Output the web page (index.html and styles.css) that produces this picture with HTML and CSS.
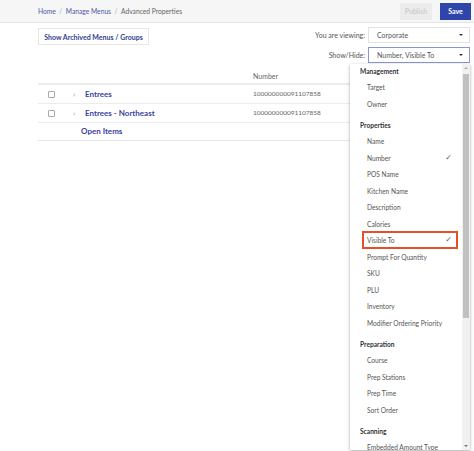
FILE: index.html
```html
<!DOCTYPE html>
<html lang="en">

<head>
  <meta charset="UTF-8">
  <meta name="viewport" content="width=device-width, initial-scale=1.0">
  <title>Advanced Properties</title>
  <link rel="stylesheet" href="styles.css">
</head>

<body>
  <div class="topbar">
    <div class="crumbs">
      <a href="#">Home</a><span class="sep">/</span><a href="#">Manage Menus</a><span class="sep">/</span><span class="current">Advanced Properties</span>
    </div>
    <div class="actions">
      <button class="btn-publish">Publish</button>
      <button class="btn-save">Save</button>
    </div>
  </div>

  <div class="main">
    <div class="toolbar">
      <button class="btn-archived">Show Archived Menus / Groups</button>
      <div class="filters">
        <div class="filter">
          <label>You are viewing:</label>
          <div class="select">Corporate<span class="caret"></span></div>
        </div>
        <div class="filter">
          <label>Show/Hide:</label>
          <div class="select open">Number, Visible To<span class="caret"></span></div>
        </div>
      </div>
    </div>

    <table class="grid">
      <thead>
        <tr>
          <th class="col-check"></th>
          <th class="col-arrow"></th>
          <th class="col-name"></th>
          <th>Number</th>
        </tr>
      </thead>
      <tbody>
        <tr>
          <td class="col-check"><span class="box"></span></td>
          <td class="col-arrow">&rsaquo;</td>
          <td class="col-name"><a href="#">Entrees</a></td>
          <td class="num">100000000091107858</td>
        </tr>
        <tr>
          <td class="col-check"><span class="box"></span></td>
          <td class="col-arrow">&rsaquo;</td>
          <td class="col-name"><a href="#">Entrees - Northeast</a></td>
          <td class="num">100000000091107858</td>
        </tr>
        <tr>
          <td class="col-check"></td>
          <td colspan="2" class="open-items"><a href="#">Open Items</a></td>
          <td></td>
        </tr>
      </tbody>
    </table>
  </div>

  <div class="menu">
    <div class="menu-list">
      <div class="group">Management</div>
      <div class="item">Target</div>
      <div class="item">Owner</div>

      <div class="group">Properties</div>
      <div class="item">Name</div>
      <div class="item checked">Number</div>
      <div class="item">POS Name</div>
      <div class="item">Kitchen Name</div>
      <div class="item">Description</div>
      <div class="item">Calories</div>
      <div class="item checked marked">Visible To</div>
      <div class="item">Prompt For Quantity</div>
      <div class="item">SKU</div>
      <div class="item">PLU</div>
      <div class="item">Inventory</div>
      <div class="item">Modifier Ordering Priority</div>

      <div class="group">Preparation</div>
      <div class="item">Course</div>
      <div class="item">Prep Stations</div>
      <div class="item">Prep Time</div>
      <div class="item">Sort Order</div>

      <div class="group">Scanning</div>
      <div class="item">Embedded Amount Type</div>
    </div>
    <div class="scroll">
      <span class="arrow-up"></span>
      <div class="thumb"></div>
      <span class="arrow-down"></span>
    </div>
  </div>
</body>

</html>
```

FILE: styles.css
```css
* {
  margin: 0;
  padding: 0;
  box-sizing: border-box;
}

body {
  background: #fff;
  font-family: 'Lato', 'Liberation Sans', sans-serif;
  font-size: 7px;
  color: #444;
  position: relative;
  height: 451px;
  overflow: hidden;
}

a {
  text-decoration: none;
}

button {
  font-family: inherit;
  cursor: pointer;
}

.topbar {
  height: 23px;
  background: #f6f6f6;
  border-bottom: 1px solid #e4e4e4;
  display: flex;
  align-items: center;
  justify-content: space-between;
  padding: 0 3px 0 38px;
}

.crumbs {
  color: #666;
  font-size: 6.7px;
}

.crumbs a {
  color: #4a56a8;
}

.crumbs .sep {
  color: #aaa;
  margin: 0 3.5px;
}

.actions {
  display: flex;
  gap: 8px;
}

.btn-publish {
  width: 32px;
  height: 17px;
  border: none;
  background: #ececec;
  color: #c4c4c4;
  font-size: 7px;
}

.btn-save {
  width: 31px;
  height: 17px;
  border: none;
  background: #2e46aa;
  color: #fff;
  font-weight: bold;
  font-size: 7px;
}

.main {
  padding: 0 4px 0 38px;
}

.toolbar {
  display: flex;
  justify-content: space-between;
  align-items: flex-start;
  padding-top: 4px;
}

.btn-archived {
  margin-top: 1px;
  width: 111px;
  height: 17px;
  background: #fff;
  border: 1px solid #e6e6e6;
  color: #33408f;
  font-weight: bold;
  font-size: 7px;
}

.filters {
  display: flex;
  flex-direction: column;
  gap: 4px;
}

.filter {
  display: flex;
  align-items: center;
  justify-content: flex-end;
}

.filter label {
  color: #555;
  margin-right: 3px;
}

.select {
  width: 102px;
  height: 16px;
  border: 1px solid #e2e2e2;
  display: flex;
  align-items: center;
  justify-content: space-between;
  padding: 0 6px 0 8px;
  color: #555;
}

.select.open {
  border-color: #8a96d2;
}

.caret {
  width: 0;
  height: 0;
  border-left: 2px solid transparent;
  border-right: 2px solid transparent;
  border-top: 2px solid #333;
}

.grid {
  width: 100%;
  border-collapse: collapse;
  margin-top: 5px;
}

.grid th {
  text-align: left;
  font-weight: normal;
  color: #666;
  height: 16px;
  border-bottom: 2px solid #ececec;
}

.grid td {
  height: 19px;
  border-bottom: 1px solid #ececec;
}

.grid tr:last-child td {
  height: 18px;
  border-bottom: 1px solid #e6e6e6;
}

.col-check {
  width: 26px;
  text-align: center;
}

.box {
  display: inline-block;
  width: 7px;
  height: 7px;
  border: 1px solid #aaa;
  border-radius: 1px;
  vertical-align: middle;
}

.col-arrow {
  width: 21px;
  color: #999;
  font-size: 8px;
  padding-left: 9px;
}

.col-name {
  width: 168px;
}

.col-name a,
.open-items a {
  color: #3a449e;
  font-weight: bold;
  font-size: 8px;
}

.open-items {
  padding-left: 17px;
}

.num {
  color: #666;
  font-size: 6.5px;
}

.menu {
  position: absolute;
  left: 350px;
  top: 64px;
  width: 120px;
  height: 386px;
  background: #fff;
  box-shadow: 0 1px 3px rgba(0, 0, 0, 0.35);
  display: flex;
  overflow: hidden;
}

.menu-list {
  flex: 1;
  padding: 0 0 0 10px;
  font-size: 6.6px;
}

.group {
  font-weight: bold;
  color: #333;
  height: 15px;
  line-height: 15px;
  margin-top: 6px;
}

.group:first-child {
  margin-top: 0;
}

.item {
  height: 16.5px;
  line-height: 16.5px;
  padding-left: 7px;
  color: #555;
  position: relative;
  margin-right: 2px;
}

.item.checked::after {
  content: '\2713';
  position: absolute;
  right: 8px;
  top: 0;
  color: #555;
  font-family: 'DejaVu Sans', sans-serif;
  font-size: 8px;
}

.item.marked {
  height: 18px;
  line-height: 14px;
  border: 2px solid #e2522a;
  margin: -0.75px 4px -0.75px 2px;
  padding-left: 3px;
}

.item.marked::after {
  top: 0;
  right: 4px;
}

.scroll {
  width: 8px;
  background: #f1f1f1;
  display: flex;
  flex-direction: column;
  align-items: center;
  padding: 3px 0;
}

.thumb {
  width: 6px;
  height: 244px;
  background: #c1c1c1;
  margin-top: 5px;
  flex: none;
}

.arrow-up {
  border-left: 2px solid transparent;
  border-right: 2px solid transparent;
  border-bottom: 2px solid #aaa;
}

.arrow-down {
  margin-top: auto;
  border-left: 2px solid transparent;
  border-right: 2px solid transparent;
  border-top: 2px solid #777;
}
```
